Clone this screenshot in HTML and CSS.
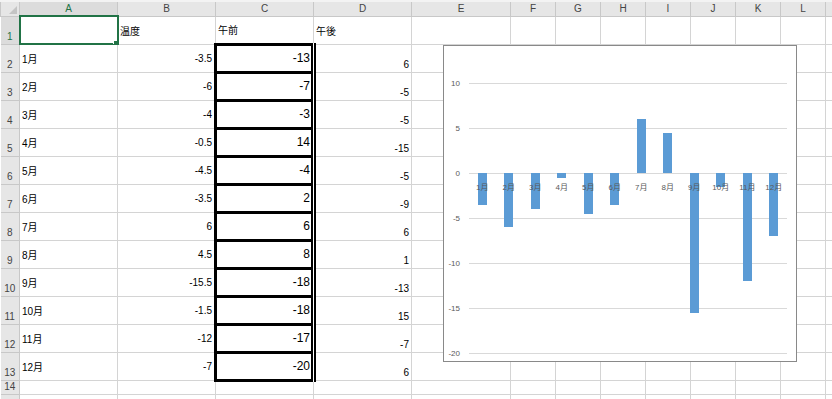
FILE: index.html
```html
<!DOCTYPE html>
<html lang="ja">
<head>
  <meta charset="UTF-8" />
  <title>Sheet1</title>
  <link rel="stylesheet" href="styles.css">
</head>
<body>
  <div class="sheet">
    <table class="grid">
      <colgroup>
        <col class="w-rh"><col class="w-big"><col class="w-big"><col class="w-big"><col class="w-big"><col class="w-e">
        <col class="w-sm"><col class="w-sm"><col class="w-sm"><col class="w-sm"><col class="w-sm"><col class="w-sm"><col class="w-sm"><col class="w-rest">
      </colgroup>
      <thead>
        <tr class="hdr">
          <th class="corner"><span class="tri"></span></th>
          <th class="cur">A</th><th>B</th><th>C</th><th>D</th><th>E</th>
          <th>F</th><th>G</th><th>H</th><th>I</th><th>J</th><th>K</th><th>L</th><th></th>
        </tr>
      </thead>
      <tbody id="rows">
        <tr>
          <th class="rh cur">1</th>
          <td class="sel"></td><td class="lbl">温度</td><td class="lbl">午前</td><td class="lbl">午後</td>
          <td></td><td></td><td></td><td></td><td></td><td></td><td></td><td></td><td></td>
        </tr>
      </tbody>
    </table>

    <div class="chart">
      <svg id="chartSvg" width="354" height="317" viewBox="0 0 354 317"></svg>
    </div>
  </div>

  <script>
    const months = ['1月','2月','3月','4月','5月','6月','7月','8月','9月','10月','11月','12月'];
    const temps = [-3.5, -6, -4, -0.5, -4.5, -3.5, 6, 4.5, -15.5, -1.5, -12, -7];
    const am = [-13, -7, -3, 14, -4, 2, 6, 8, -18, -18, -17, -20];
    const pm = [6, -5, -5, -15, -5, -9, 6, 1, -13, 15, -7, 6];

    const tbody = document.getElementById('rows');
    const blanks = n => '<td></td>'.repeat(n);

    months.forEach((m, i) => {
      const tr = document.createElement('tr');
      tr.innerHTML = `<th class="rh">${i + 2}</th>` +
        `<td class="lbl">${m}</td>` +
        `<td class="num">${temps[i]}</td>` +
        `<td class="box">${am[i]}</td>` +
        `<td class="low">${pm[i]}</td>` + blanks(9);
      tbody.appendChild(tr);
    });

    // row 14, plus the edge of row 15 peeking in at the bottom
    ['14', ''].forEach(n => {
      const tr = document.createElement('tr');
      tr.className = 'short';
      tr.innerHTML = `<th class="rh">${n}</th>` + blanks(13);
      tbody.appendChild(tr);
    });

    // column chart
    const svg = document.getElementById('chartSvg');
    const left = 26, right = 344, zero = 128, unit = 9;
    const step = (right - left) / 12;
    let out = '';

    for (let v = 10; v >= -20; v -= 5) {
      const y = zero - v * unit;
      out += `<line x1="${left}" x2="${right}" y1="${y}" y2="${y}" class="gl"/>`;
      out += `<text x="17" y="${y + 3}" class="ylab">${v}</text>`;
    }

    temps.forEach((v, i) => {
      const cx = left + step * (i + 0.5);
      const h = Math.abs(v) * unit;
      const y = v >= 0 ? zero - h : zero;
      out += `<rect x="${(cx - 4.5).toFixed(1)}" y="${y}" width="9" height="${h}" class="bar"/>`;
    });

    months.forEach((m, i) => {
      const cx = left + step * (i + 0.5);
      out += `<text x="${cx.toFixed(1)}" y="145" class="xlab">${m}</text>`;
    });

    svg.innerHTML = out;
  </script>
</body>
</html>
```

FILE: styles.css
```css
html, body {
  margin: 0;
  background: #fff;
  overflow: hidden;
}
.sheet {
  position: relative;
  width: 832px;
  height: 399px;
  padding-top: 2px;
  box-sizing: border-box;
  background: #f3f3f3;
  font-family: "Liberation Sans", "Noto Sans CJK JP", sans-serif;
  font-size: 10px;
  color: #000;
}
.grid {
  border-collapse: collapse;
  table-layout: fixed;
  width: 832px;
  background: #fff;
}
.w-rh { width: 19px; }
.w-big { width: 98px; }
.w-e { width: 99px; }
.w-sm { width: 45px; }
.w-rest { width: 8px; }

.grid td {
  border: 1px solid #d4d4d4;
  padding: 0 2px;
  white-space: nowrap;
  overflow: hidden;
}
.grid tbody tr { height: 28px; }
.grid tbody tr.short { height: 14px; }

.hdr { height: 14px; }
.hdr th {
  background: #e6e6e6;
  border: 1px solid #c8c8c8;
  border-top: 0;
  font-weight: normal;
  font-size: 10px;
  color: #444;
  padding: 0;
  line-height: 12px;
}
.hdr th.cur {
  background: #dcdcdc;
  color: #217346;
}
.corner {
  position: relative;
}
.tri {
  position: absolute;
  right: 2px;
  bottom: 2px;
  width: 0;
  height: 0;
  border-left: 8px solid transparent;
  border-bottom: 8px solid #c4c4c4;
}

.rh {
  background: #e6e6e6;
  border: 1px solid #c8c8c8;
  border-left: 0;
  font-weight: normal;
  font-size: 10px;
  color: #444;
  padding: 0 0 1px;
  vertical-align: bottom;
  line-height: 12px;
}
.rh.cur {
  background: #dcdcdc;
  color: #217346;
}

.lbl { text-align: left; }
.num { text-align: right; }
.low {
  text-align: right;
  vertical-align: bottom;
  padding-bottom: 2px !important;
}
.grid td.box {
  border: 3px solid #000;
  border-right: 5px double #000;
  text-align: right;
  font-size: 12px;
  padding-right: 1px;
}

.grid td.sel {
  position: relative;
  outline: 2px solid #217346;
  outline-offset: -1px;
}
.sel::after {
  content: "";
  position: absolute;
  right: -3px;
  bottom: -3px;
  width: 5px;
  height: 5px;
  background: #217346;
  border: 1px solid #fff;
}

.chart {
  position: absolute;
  left: 443px;
  top: 45px;
  width: 354px;
  height: 317px;
  box-sizing: border-box;
  border: 1px solid #898989;
  background: #fff;
}
.chart svg {
  display: block;
  margin: -1px;
}
.gl {
  stroke: #d9d9d9;
  stroke-width: 1;
  shape-rendering: crispEdges;
}
.bar {
  fill: #5b9bd5;
  shape-rendering: crispEdges;
}
.ylab {
  font-size: 8px;
  fill: #595959;
  text-anchor: end;
}
.xlab {
  font-size: 8px;
  fill: #595959;
  text-anchor: middle;
}
```
